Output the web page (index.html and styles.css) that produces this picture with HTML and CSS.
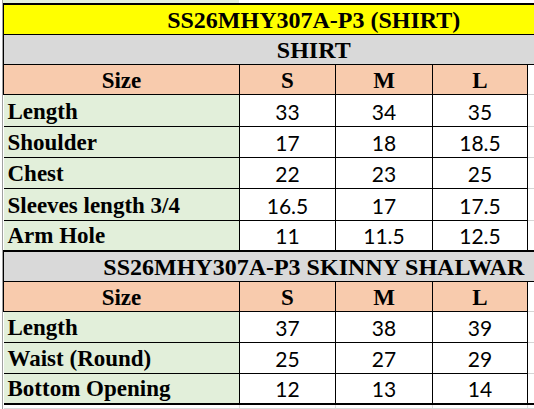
FILE: index.html
```html
<!DOCTYPE html>
<html>
<head>
<meta charset="utf-8">
<link rel="stylesheet" href="styles.css">
</head>
<body>
<div class="sheet">
  <div class="prev-row"><div class="prev-label"></div></div>
  <table class="sizes">
    <colgroup>
      <col class="c-label"><col class="c-s"><col class="c-m"><col class="c-l"><col class="c-extra">
    </colgroup>
    <tr class="r-title"><td colspan="5" class="title">SS26MHY307A-P3 (SHIRT)</td></tr>
    <tr class="r-section"><td colspan="5" class="section">SHIRT</td></tr>
    <tr class="r-head">
      <td class="head">Size</td><td class="head">S</td><td class="head">M</td><td class="head">L</td><td class="extra"></td>
    </tr>
    <tr class="r-32"><td class="label">Length</td><td class="num">33</td><td class="num">34</td><td class="num">35</td><td class="extra"></td></tr>
    <tr class="r-31"><td class="label">Shoulder</td><td class="num">17</td><td class="num">18</td><td class="num">18.5</td><td class="extra"></td></tr>
    <tr class="r-31"><td class="label">Chest</td><td class="num">22</td><td class="num">23</td><td class="num">25</td><td class="extra"></td></tr>
    <tr class="r-32"><td class="label">Sleeves length 3/4</td><td class="num">16.5</td><td class="num">17</td><td class="num">17.5</td><td class="extra"></td></tr>
    <tr class="r-31"><td class="label">Arm Hole</td><td class="num">11</td><td class="num">11.5</td><td class="num">12.5</td><td class="extra"></td></tr>
    <tr class="r-section2"><td colspan="5" class="section thick-top">SS26MHY307A-P3 SKINNY SHALWAR</td></tr>
    <tr class="r-head">
      <td class="head">Size</td><td class="head">S</td><td class="head">M</td><td class="head">L</td><td class="extra"></td>
    </tr>
    <tr class="r-31"><td class="label">Length</td><td class="num">37</td><td class="num">38</td><td class="num">39</td><td class="extra"></td></tr>
    <tr class="r-31"><td class="label">Waist (Round)</td><td class="num">25</td><td class="num">27</td><td class="num">29</td><td class="extra"></td></tr>
    <tr class="r-31"><td class="label">Bottom Opening</td><td class="num">12</td><td class="num">13</td><td class="num">14</td><td class="extra"></td></tr>
    <tr class="r-tail"><td class="grid"></td><td class="grid"></td><td class="grid"></td><td class="grid"></td><td class="grid"></td></tr>
  </table>
</div>
</body>
</html>
```
FILE: styles.css
```css
html, body {
  margin: 0;
  padding: 0;
  background: #ffffff;
}
.sheet {
  margin-left: 2px;
  border-left: 1px solid #a0a0a0;
  width: 531px;
  height: 409px;
}
.prev-row {
  height: 3px;
  display: flex;
}
.prev-label {
  width: 236px;
  background: #e2efda;
}
.sizes {
  border-collapse: collapse;
  table-layout: fixed;
  width: 531px;
}
.c-label { width: 236px; }
.c-s { width: 96px; }
.c-m { width: 97px; }
.c-l { width: 95px; }
.c-extra { width: 7px; }
.sizes td {
  border: 1px solid #000;
  padding: 0;
  text-align: center;
  vertical-align: bottom;
  color: #000;
  white-space: nowrap;
  overflow: hidden;
}
.r-title { height: 30px; }
.r-section { height: 30px; }
.r-head { height: 30px; }
.r-32 { height: 32px; }
.r-31 { height: 31px; }
.r-section2 { height: 30px; }
.r-tail { height: 4px; }
.title {
  background: #ffff00;
  border-top: 2px solid #000 !important;
  border-right: none !important;
  font: bold 24px/1 "Liberation Serif", serif;
  padding: 0 0 2px 89px !important;
}
.section {
  background: #d9d9d9;
  border-right: none !important;
  font: bold 24px/1 "Liberation Serif", serif;
  padding: 0 0 2px 89px !important;
}
.thick-top {
  border-top: 2px solid #000 !important;
}
.head {
  background: #f8cbad;
  font: bold 23px/1 "Liberation Serif", serif;
  padding-bottom: 2px !important;
}
.label {
  background: #e2efda;
  text-align: left !important;
  padding-left: 4px !important;
  padding-bottom: 3px !important;
  font: bold 23px/1 "Liberation Serif", serif;
  border-left: none !important;
}
.num {
  background: #ffffff;
  font: 21px/1 Lato, "Noto Sans", sans-serif;
  padding-bottom: 4px !important;
}
.extra {
  background: #ffffff;
  border-top-color: #d4d4d4 !important;
  border-bottom-color: #d4d4d4 !important;
  border-right: none !important;
}
.r-tail td {
  border: 1px solid #dadada;
  border-top: 2px solid #000;
}
.r-tail td.grid:first-child { border-left: none; }
.r-tail td.grid:last-child { border-right: none; }
```
